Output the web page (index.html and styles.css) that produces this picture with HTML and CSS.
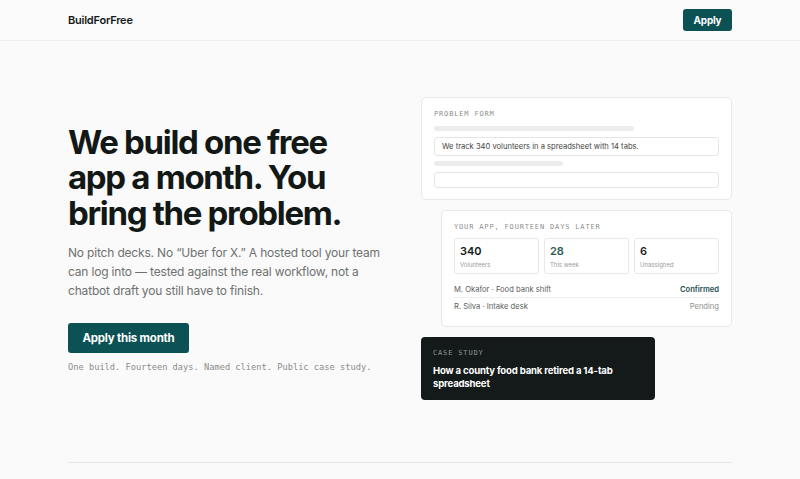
FILE: index.html
```html
<!DOCTYPE html>
<html lang="en">
<head>
<meta charset="utf-8">
<title>BuildForFree</title>
<link rel="stylesheet" href="styles.css">
</head>
<body>
<header class="topbar">
  <div class="wrap topbar-inner">
    <div class="logo">BuildForFree</div>
    <a class="btn btn-sm" href="#">Apply</a>
  </div>
</header>
<main class="wrap hero">
  <section class="copy">
    <h1>We build one free app a month. You bring the problem.</h1>
    <p class="lead">No pitch decks. No “Uber for X.” A hosted tool your team can log into — tested against the real workflow, not a chatbot draft you still have to finish.</p>
    <a class="btn btn-lg" href="#">Apply this month</a>
    <p class="mono-note">One build. Fourteen days. Named client. Public case study.</p>
  </section>
  <section class="visual">
    <div class="card form-card">
      <div class="label">PROBLEM FORM</div>
      <div class="skel skel-a"></div>
      <div class="field">We track 340 volunteers in a spreadsheet with 14 tabs.</div>
      <div class="skel skel-b"></div>
      <div class="field field-empty"></div>
    </div>
    <div class="card app-card">
      <div class="label">YOUR APP, FOURTEEN DAYS LATER</div>
      <div class="stats">
        <div class="stat"><div class="num">340</div><div class="cap">Volunteers</div></div>
        <div class="stat"><div class="num num-green">28</div><div class="cap">This week</div></div>
        <div class="stat"><div class="num">6</div><div class="cap">Unassigned</div></div>
      </div>
      <div class="row row-line"><span>M. Okafor · Food bank shift</span><span class="ok">Confirmed</span></div>
      <div class="row"><span>R. Silva · Intake desk</span><span class="pend">Pending</span></div>
    </div>
    <div class="case">
      <div class="case-label">CASE STUDY</div>
      <div class="case-title">How a county food bank retired a 14-tab spreadsheet</div>
    </div>
  </section>
</main>
<div class="wrap"><div class="rule"></div></div>
</body>
</html>
```
FILE: styles.css
```css
* { box-sizing: border-box; }
html, body { margin: 0; padding: 0; }
body {
  background: #fafafa;
  font-family: Inter, "Noto Sans", sans-serif;
  color: #141a19;
}
.wrap { width: 664px; margin: 0 auto; }
.topbar {
  height: 41px;
  border-bottom: 1px solid #ececec;
  background: #fbfbfb;
}
.topbar-inner {
  height: 40px;
  display: flex;
  align-items: center;
  justify-content: space-between;
}
.logo { font-size: 11px; font-weight: 600; letter-spacing: -0.02em; }
.btn {
  display: inline-flex;
  align-items: center;
  justify-content: center;
  background: #0c5255;
  color: #fff;
  text-decoration: none;
  font-weight: 700;
  border-radius: 3px;
  letter-spacing: -0.02em;
}
.btn-sm { width: 49px; height: 22px; font-size: 10px; }
.btn-lg { width: 121px; height: 30px; font-size: 11.5px; margin-top: 23px; }
.hero {
  display: grid;
  grid-template-columns: 1fr 311px;
  column-gap: 21px;
  align-items: center;
  padding: 56px 0 62px;
}
h1 {
  margin: 0;
  width: 290px;
  font-size: 33px;
  line-height: 35.5px;
  font-weight: 700;
  letter-spacing: -0.04em;
  color: #121816;
}
.lead {
  margin: 12px 0 0;
  font-size: 12px;
  line-height: 19px;
  color: #6e7170;
  width: 332px;
  letter-spacing: -0.015em;
}
.mono-note {
  margin: 9px 0 0;
  font-family: "DejaVu Sans Mono", "Liberation Mono", monospace;
  font-size: 8.7px;
  color: #8a8c8b;
}
.visual { display: flex; flex-direction: column; gap: 10px; }
.card {
  background: #fff;
  border: 1px solid #e8e8e8;
  border-radius: 5px;
  padding: 11px 12px 11px;
}
.label {
  font-family: "DejaVu Sans Mono", "Liberation Mono", monospace;
  font-size: 7px;
  letter-spacing: 0.12em;
  color: #8d8f8e;
  line-height: 10px;
}
.skel { height: 5px; border-radius: 3px; background: #ececec; }
.skel-a { width: 200px; margin-top: 7px; }
.skel-b { width: 129px; margin-top: 5px; }
.field {
  margin-top: 6px;
  height: 19px;
  border: 1px solid #e6e6e6;
  border-radius: 3px;
  font-size: 7.6px;
  color: #444;
  padding: 0 7px;
  display: flex;
  align-items: center;
}
.field-empty { height: 16px; margin-top: 6px; }
.app-card { margin-left: 20px; padding-bottom: 11px; }
.stats {
  display: grid;
  grid-template-columns: 1fr 1fr 1fr;
  gap: 5px;
  margin-top: 6px;
}
.stat {
  border: 1px solid #e8e8e8;
  border-radius: 3px;
  height: 36px;
  padding: 5px 5px 0;
}
.num { font-size: 11px; font-weight: 600; line-height: 14px; color: #161b1a; }
.num-green { color: #2c5c50; }
.cap { font-size: 6px; color: #9a9c9b; margin-top: 3px; }
.row {
  display: flex;
  justify-content: space-between;
  font-size: 7.6px;
  color: #5a5d5c;
  height: 17px;
  align-items: center;
}
.row-line { margin-top: 7px; border-bottom: 1px solid #efefef; }
.ok { color: #1d4f52; font-weight: 600; }
.pend { color: #8e908f; }
.case {
  width: 234px;
  background: #141a19;
  border-radius: 4px;
  padding: 11px 12px 10px;
}
.case-label {
  font-family: "DejaVu Sans Mono", "Liberation Mono", monospace;
  font-size: 7px;
  letter-spacing: 0.12em;
  color: #8f9795;
  line-height: 10px;
}
.case-title {
  margin-top: 6px;
  color: #fff;
  font-size: 9.6px;
  font-weight: 700;
  line-height: 13px;
  letter-spacing: -0.02em;
  width: 180px;
}
.rule { border-top: 1px solid #e8e8e8; }
```
